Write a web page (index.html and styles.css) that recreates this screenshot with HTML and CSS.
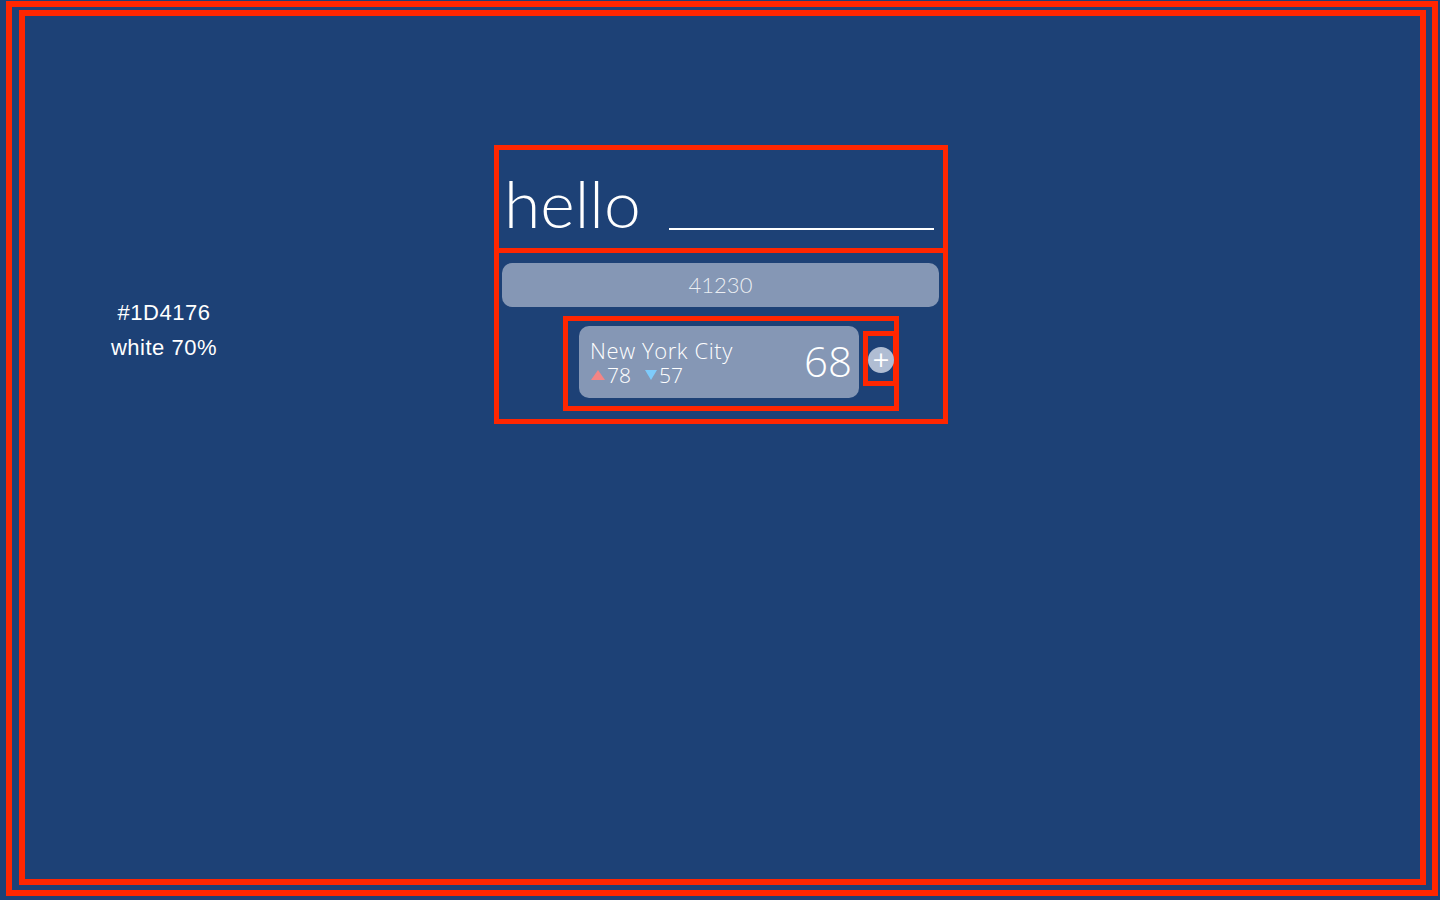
FILE: index.html
```html
<!DOCTYPE html>
<html lang="en">
<head>
<meta charset="utf-8">
<title>Weather</title>
<link rel="stylesheet" href="styles.css">
</head>
<body>
<div class="frame-outer">
  <div class="frame-inner">
    <div class="note">
      <div class="note-line">#1D4176</div>
      <div class="note-line">white 70%</div>
    </div>
    <div class="app">
      <div class="hello-box">
        <span class="hello">hello</span>
        <span class="name-input"></span>
      </div>
      <div class="panel">
        <div class="zip">41230</div>
        <div class="city-frame">
          <div class="card">
            <div class="info">
              <div class="city">New York City</div>
              <div class="hilo"><span class="tri up"></span><span class="num">78</span><span class="tri down"></span><span class="num">57</span></div>
            </div>
            <div class="temp">68</div>
          </div>
          <div class="add-frame"><div class="add">+</div></div>
        </div>
      </div>
    </div>
  </div>
</div>
</body>
</html>
```

FILE: styles.css
```css
html, body {
  margin: 0;
  padding: 0;
  background: #1D4176;
}
body {
  width: 1440px;
  height: 900px;
  overflow: hidden;
  font-family: "Open Sans", "Liberation Sans", sans-serif;
  color: #fff;
}
.frame-outer {
  box-sizing: border-box;
  margin: 1px 0 0 6px;
  width: 1432px;
  height: 895px;
  border: 6px solid #ff2600;
}
.frame-inner {
  box-sizing: border-box;
  margin: 3px 0 0 7px;
  width: 1407px;
  height: 875px;
  border: 6px solid #ff2600;
  display: flex;
  align-items: flex-start;
}
.note {
  width: 200px;
  margin: 279px 0 0 39px;
  text-align: center;
  font-family: "Liberation Sans", Arial, sans-serif;
  font-size: 22px;
  letter-spacing: 0.5px;
  line-height: 35px;
  color: #fff;
}
.app {
  width: 454px;
  margin: 129px 0 0 230px;
}
.hello-box {
  box-sizing: border-box;
  height: 108px;
  border: 5px solid #ff2600;
  display: flex;
  align-items: flex-end;
  padding: 0 0 12px 5px;
}
.hello {
  font-family: Lato, "Open Sans", sans-serif;
  font-weight: 300;
  font-size: 66px;
  line-height: 66px;
  color: #fff;
}
.name-input {
  display: block;
  width: 265px;
  height: 0;
  border-bottom: 2px solid #fff;
  margin: 0 9px 6px auto;
}
.panel {
  box-sizing: border-box;
  height: 171px;
  border: 5px solid #ff2600;
  border-top: 0;
  padding: 10px 4px 0 3px;
}
.zip {
  height: 44px;
  border-radius: 10px;
  background: #8597b5;
  text-align: center;
  font-family: Lato, "Open Sans", sans-serif;
  font-weight: 300;
  font-size: 22px;
  line-height: 44px;
  color: rgba(255, 255, 255, 0.85);
}
.city-frame {
  box-sizing: border-box;
  width: 336px;
  height: 95px;
  margin: 9px 0 0 61px;
  border: 5px solid #ff2600;
  display: flex;
  align-items: flex-start;
  padding: 5px 0 0 11px;
}
.card {
  box-sizing: border-box;
  width: 280px;
  height: 72px;
  border-radius: 10px;
  background: #8597b5;
  display: flex;
  align-items: center;
  justify-content: space-between;
  padding: 0 7px 0 11px;
}
.info {
  align-self: flex-start;
  padding-top: 11px;
}
.city {
  font-weight: 300;
  font-size: 22px;
  letter-spacing: 0.6px;
  line-height: 26px;
  color: #fff;
}
.hilo {
  display: flex;
  align-items: center;
  margin-top: 1px;
  font-weight: 300;
  font-size: 21px;
  line-height: 22px;
}
.num {
  margin-left: 2px;
}
.tri {
  display: block;
  width: 0;
  height: 0;
}
.tri.up {
  margin-left: 1px;
  border-left: 7px solid transparent;
  border-right: 7px solid transparent;
  border-bottom: 10px solid #f38585;
}
.tri.down {
  margin-left: 14px;
  border-left: 6px solid transparent;
  border-right: 6px solid transparent;
  border-top: 10px solid #7ecbfb;
}
.temp {
  font-weight: 300;
  font-size: 42px;
  line-height: 42px;
  margin-top: -2px;
}
.add-frame {
  box-sizing: border-box;
  width: 35px;
  height: 55px;
  margin: 5px -5px 0 4px;
  border: 5px solid #ff2600;
}
.add {
  width: 26px;
  height: 26px;
  margin-top: 11px;
  border-radius: 50%;
  background: #b0bdd3;
  color: #fff;
  text-align: center;
  font-family: "DejaVu Sans", sans-serif;
  font-size: 22px;
  line-height: 25px;
}
```
